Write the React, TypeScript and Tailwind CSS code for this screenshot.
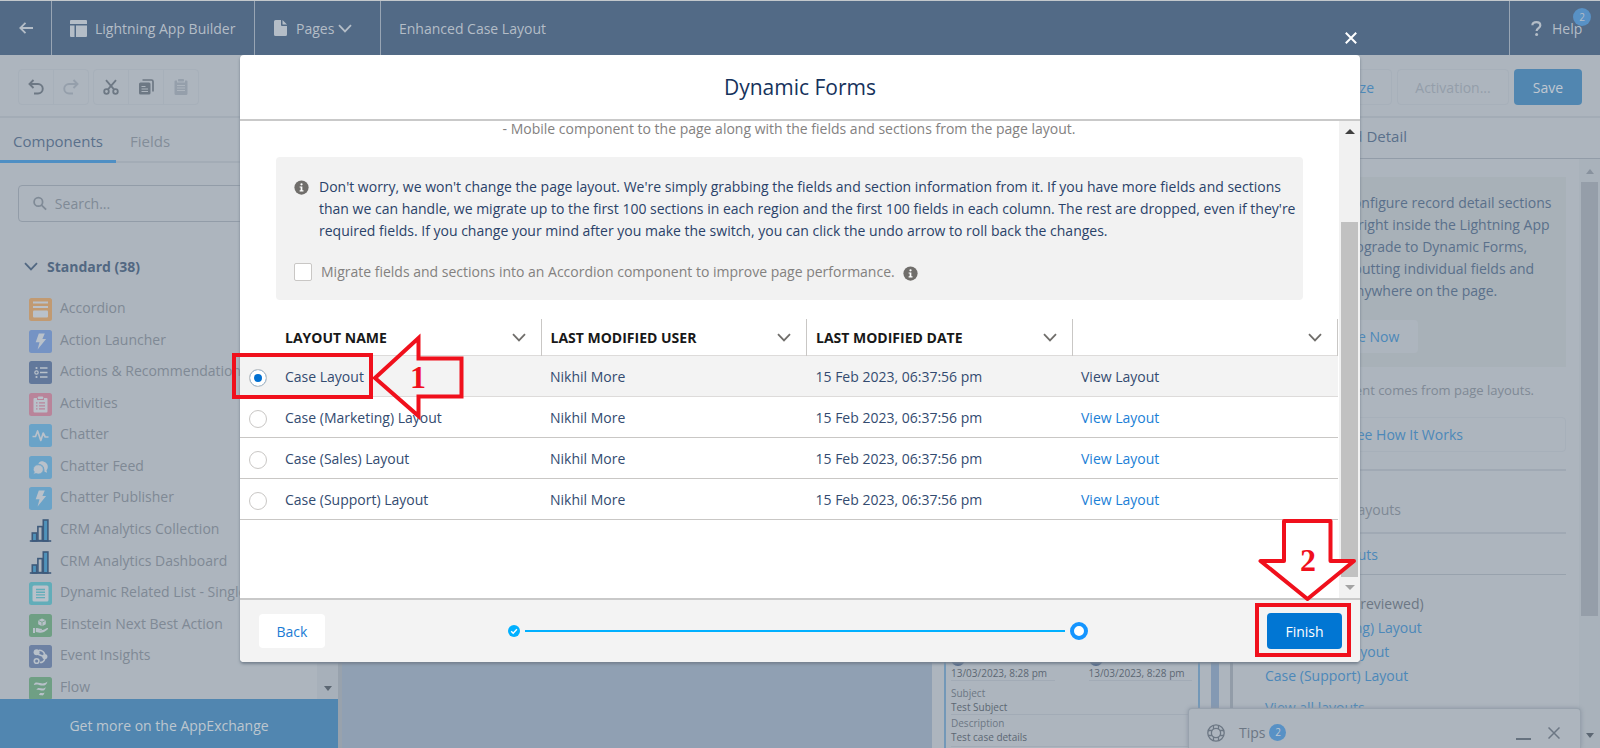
import { useState, type ReactNode } from "react";

const layouts = ["Case Layout", "Case (Marketing) Layout", "Case (Sales) Layout", "Case (Support) Layout"];
const columns = ["LAYOUT NAME", "LAST MODIFIED USER", "LAST MODIFIED DATE", ""];

function Chevron({ className = "" }: { className?: string }) {
  return (
    <svg viewBox="0 0 14 9" className={className} fill="none" stroke="currentColor" strokeWidth="1.8" aria-hidden="true">
      <path d="M1 1.2 7 7.4 13 1.2" />
    </svg>
  );
}

function Info({ className = "" }: { className?: string }) {
  return (
    <svg viewBox="0 0 16 16" className={className} aria-hidden="true">
      <circle cx="8" cy="8" r="7.6" fill="#706e6b" />
      <circle cx="8" cy="4.6" r="1.2" fill="#fff" />
      <path d="M6 6.8h2.9v4.1h1.2v1.3H6v-1.3h1.1V8.1H6z" fill="#fff" />
    </svg>
  );
}

function Tile({ bg, children }: { bg: string; children: ReactNode }) {
  return (
    <svg viewBox="0 0 23 23" className="size-[23px] shrink-0" aria-hidden="true">
      <rect width="23" height="23" rx="2.5" fill={bg} />
      {children}
    </svg>
  );
}

const pale = "#b9c1ca";

const bolt = <path d="M9.8 3.5h6l-2.4 5.6h3.7L8.6 19.6l1.9-7.4H6.7z" fill={pale} />;

function BarsIcon() {
  return (
    <svg viewBox="0 0 23 23" className="size-[23px] shrink-0" aria-hidden="true">
      <g stroke="#3e5a7b" strokeWidth="1.6">
        <rect x="3.3" y="14" width="4.4" height="8" fill="#4f93bb" />
        <rect x="8.9" y="7.6" width="4.4" height="14" fill="#adb5be" />
        <rect x="14.3" y="1" width="4.6" height="21" fill="#4f93bb" />
        <path d="M.8 22h21.4" />
      </g>
    </svg>
  );
}

const components: { name: string; icon: ReactNode }[] = [
  {
    name: "Accordion",
    icon: (
      <Tile bg="#c19a72">
        <path d="M4 4.6h15M4 9h15" stroke={pale} strokeWidth="2" />
        <rect x="4" y="12.4" width="15" height="7" rx="1" fill={pale} />
      </Tile>
    ),
  },
  { name: "Action Launcher", icon: <Tile bg="#7593c4">{bolt}</Tile> },
  {
    name: "Actions & Recommendations",
    icon: (
      <Tile bg="#62789b">
        <path d="M11 7h7.500M11 11.500h7.500M11 16h7.500" stroke={pale} strokeWidth="1.700" />
        <circle cx="7.500" cy="7" r="1.100" fill={pale} />
        <circle cx="7.500" cy="11.500" r="1.700" fill="none" stroke={pale} strokeWidth="1.200" />
        <circle cx="7.500" cy="16" r="1.100" fill={pale} />
      </Tile>
    ),
  },
  {
    name: "Activities",
    icon: (
      <Tile bg="#b9849a">
        <path d="M5.500 5h2.500v2h7V5h2.500a1 1 0 0 1 1 1v12.500a1 1 0 0 1-1 1h-12a1 1 0 0 1-1-1V6a1 1 0 0 1 1-1z" fill={pale} />
        <rect x="8.800" y="3.400" width="5.400" height="2.600" rx=".8" fill={pale} />
        <path d="M7 9.800h1.500M10 9.800h6M7 12.800h1.500M10 12.800h6M7 15.800h1.500M10 15.800h6" stroke="#b9849a" strokeWidth="1.300" />
      </Tile>
    ),
  },
  {
    name: "Chatter",
    icon: (
      <Tile bg="#6aa3c8">
        <path d="M3.500 12.500h3L8.600 7l3.200 9.500 2.400-7.500 2 4h3.300" fill="none" stroke={pale} strokeWidth="1.700" strokeLinejoin="round" />
      </Tile>
    ),
  },
  {
    name: "Chatter Feed",
    icon: (
      <Tile bg="#6aa3c8">
        <path d="M12.500 5.200c3.600 0 6.300 2.400 6.300 5.500 0 1.400-.5 2.600-1.300 3.500l.6 2.500-2.600-.9c.3-5-2.300-7.800-6.200-8 .8-1.600 1.800-2.600 3.200-2.600z" fill={pale} />
        <path d="M9.300 8.800c3 0 5 2 5 4.600s-2.200 4.600-5 4.600c-.8 0-1.600-.2-2.300-.5l-2.600.8.900-2.400c-.6-.7-1-1.600-1-2.500 0-2.600 2.200-4.600 5-4.600z" fill={pale} stroke="#6aa3c8" strokeWidth=".7" />
      </Tile>
    ),
  },
  { name: "Chatter Publisher", icon: <Tile bg="#6aa3c8">{bolt}</Tile> },
  { name: "CRM Analytics Collection", icon: <BarsIcon /> },
  { name: "CRM Analytics Dashboard", icon: <BarsIcon /> },
  {
    name: "Dynamic Related List - Single",
    icon: (
      <Tile bg="#62adb9">
        <rect x="3.500" y="3.500" width="16" height="16" rx="1.500" fill={pale} />
        <path d="M7 7.500h9M7 10.200h9M7 12.900h9M7 15.600h9" stroke="#62adb9" strokeWidth="1.400" />
      </Tile>
    ),
  },
  {
    name: "Einstein Next Best Action",
    icon: (
      <Tile bg="#6f9f84">
        <path d="m13 4.500 3.800 1.800v4L13 12.200l-3.800-1.900v-4z" fill={pale} />
        <path d="m9.400 6.400 3.600 1.800 3.600-1.800M13 8.200v4" fill="none" stroke="#6f9f84" strokeWidth=".8" />
        <path d="M4 14h2v5H4zM6.800 14.200c2-.8 3.400.6 5.500.6 1 0 1 1.200 0 1.300h-2c3 .7 5.500-.6 7.700-2 .8-.3 1.500.5.8 1.200-2.700 2.500-5.500 3.700-8 3.500l-4-.8z" fill={pale} />
      </Tile>
    ),
  },
  {
    name: "Event Insights",
    icon: (
      <Tile bg="#6d81a3">
        <circle cx="7.600" cy="7.300" r="3" fill={pale} />
        <circle cx="15.800" cy="11.500" r="2.600" fill={pale} />
        <circle cx="7.600" cy="16" r="2.300" fill="none" stroke={pale} strokeWidth="1.600" />
        <path d="M10 5.200c3 0 4.800 1.400 5.700 4M11 17.500c2.400 0 4-1.200 4.800-3.600M9 9.200l5 2" fill="none" stroke={pale} strokeWidth="1.600" />
      </Tile>
    ),
  },
  {
    name: "Flow",
    icon: (
      <Tile bg="#6f9f84">
        <path d="M4.800 8c1-3.600 3.700-2.400 6.200-1.900 2.700.6 4.600.6 7.500-1.600-1 4-3.700 4.500-6.400 3.900-2.800-.7-4.600-1.600-7.300-.4zM7.500 13c.8-2.800 2.800-2.200 4.700-1.700 1.700.4 2.900.2 4.600-1.100-.8 3.200-2.600 3.700-4.500 3.200-2-.4-3.200-1-4.800-.4zM10 18c.6-2.400 1.700-2.200 2.900-1.900 1 .2 1.600.1 2.600-.6-.6 2.700-1.700 3.200-2.900 2.800-1-.3-1.700-.6-2.600-.3z" fill={pale} />
      </Tile>
    ),
  },
];

function TopBar() {
  return (
    <header className="flex h-[55px] shrink-0 border-t border-[#c3c8cc] bg-[#526a86] text-[14px] text-[#b4bdc7]">
      <button aria-label="Back to previous page" className="flex w-[52px] items-center justify-center border-r border-[#98a5b4]">
        <svg viewBox="0 0 14 12" className="h-3 w-3.5" fill="none" stroke="currentColor" strokeWidth="1.8" aria-hidden="true">
          <path d="M14 6H1.500M6.500.8 1.300 6l5.200 5.200" />
        </svg>
      </button>
      <a href="#" className="flex w-[203px] items-center gap-2 border-r border-[#98a5b4] pl-[18px]">
        <svg viewBox="0 0 17 17" className="size-[17px]" fill="currentColor" aria-hidden="true">
          <path d="M1 0h15a1 1 0 0 1 1 1v3H0V1a1 1 0 0 1 1-1zM0 5.500h4.500V17H1a1 1 0 0 1-1-1zM6 5.500h11V16a1 1 0 0 1-1 1H6z" />
        </svg>
        Lightning App Builder
      </a>
      <button className="flex w-[126px] items-center border-r border-[#98a5b4] pl-[19px]">
        <svg viewBox="0 0 13 16" className="mr-[9px] h-4 w-[13px]" fill="currentColor" aria-hidden="true">
          <path d="M1.500 0H7v5a1 1 0 0 0 1 1h5v8.500a1.500 1.500 0 0 1-1.500 1.500h-10A1.500 1.500 0 0 1 0 14.500v-13A1.500 1.500 0 0 1 1.500 0zM8.500 0 13 4.500H8.500z" />
        </svg>
        Pages
        <Chevron className="ml-1 h-[9px] w-3.5" />
      </button>
      <span className="flex flex-1 items-center pl-[18px]">Enhanced Case Layout</span>
      <button className="relative flex w-[91px] items-center border-l border-[#98a5b4] pl-[21px]">
        <svg viewBox="0 0 11 15" className="mr-2.5 h-[15px] w-[11px]" aria-hidden="true">
          <path d="M1.400 4.200C1.400 2.200 3 1.200 5.300 1.200s4 1.200 4 3.200c0 2.700-3.700 2.600-3.700 5.600" fill="none" stroke="currentColor" strokeWidth="2.200" />
          <circle cx="5.600" cy="13.400" r="1.500" fill="currentColor" />
        </svg>
        Help
        <span className="absolute top-[7px] right-[9px] flex size-[18px] items-center justify-center rounded-full bg-[#5891c5] text-[10px]">2</span>
      </button>
    </header>
  );
}

const toolButton = "flex w-[35px] items-center justify-center border-r border-[#a7b0ba]";

function Toolbar() {
  return (
    <div className="flex h-[63px] shrink-0 items-center border-b-2 border-[#a3acb6] px-[18px] pt-[3px]">
      <div className="flex h-9 rounded border border-[#a7b0ba] text-[#6d7884]">
        <button aria-label="Undo" className={toolButton}>
          <svg viewBox="0 0 16 16" className="size-4" fill="none" stroke="currentColor" strokeWidth="1.900" aria-hidden="true">
            <path d="M5.500 1 1.500 5l4 4M1.800 5H10a4.600 4.600 0 0 1 0 9.500H6" />
          </svg>
        </button>
        <button aria-label="Redo" className="flex w-[34px] items-center justify-center text-[#959fab]">
          <svg viewBox="0 0 16 16" className="size-4" fill="none" stroke="currentColor" strokeWidth="1.900" aria-hidden="true">
            <path d="m10.500 1 4 4-4 4M14.200 5H6a4.600 4.600 0 0 0 0 9.500h4" />
          </svg>
        </button>
      </div>
      <div className="ml-1 flex h-9 rounded border border-[#a7b0ba] text-[#6d7884]">
        <button aria-label="Cut" className={toolButton}>
          <svg viewBox="0 0 16 16" className="size-4" fill="none" stroke="currentColor" strokeWidth="1.800" aria-hidden="true">
            <circle cx="3.500" cy="12.500" r="2.300" />
            <circle cx="12.500" cy="12.500" r="2.300" />
            <path d="M3 1.200 11.200 10.700M13 1.200 4.800 10.700" />
          </svg>
        </button>
        <button aria-label="Copy" className={toolButton}>
          <svg viewBox="0 0 16 16" className="size-4" aria-hidden="true">
            <path d="M4.500 1h9A1.500 1.500 0 0 1 15 2.500v10" fill="none" stroke="currentColor" strokeWidth="1.700" />
            <rect x="1" y="3.500" width="11.500" height="12" rx="1.500" fill="currentColor" />
            <path d="M3.500 7.500h4M3.500 10h6.500M3.500 12.500h6.500" stroke="#adb5be" strokeWidth="1.100" />
          </svg>
        </button>
        <button aria-label="Paste" className="flex w-[34px] items-center justify-center text-[#959fab]">
          <svg viewBox="0 0 16 16" className="size-4" aria-hidden="true">
            <path d="M2.500 1.500H4v2h8v-2h1.500A1 1 0 0 1 14.500 2.500v12a1.500 1.500 0 0 1-1.500 1.500H3a1.500 1.500 0 0 1-1.500-1.500v-12a1 1 0 0 1 1-1z" fill="currentColor" />
            <rect x="5" width="6" height="2.500" rx=".8" fill="currentColor" />
            <path d="M4 6.500h8M4 9h8M4 11.500h8" stroke="#adb5be" strokeWidth="1" />
          </svg>
        </button>
      </div>
      <div className="ml-auto flex h-9 gap-[5px]">
        <button className="rounded border border-[#a7b0ba] px-[17px] text-[#4c88b9]">Analyze</button>
        <button className="w-28 rounded border border-[#a7b0ba] text-[#949eaa]">Activation...</button>
        <button className="w-[68px] rounded bg-[#5186b0] text-[#c0c8d1]">Save</button>
      </div>
    </div>
  );
}

function Sidebar() {
  return (
    <aside className="flex w-[342px] shrink-0 flex-col border-r-4 border-[#98a2ad]">
      <div role="tablist" className="flex h-[45px] shrink-0 border-b-2 border-[#a3acb6] text-[15px]">
        <button role="tab" aria-selected="true" className="-mb-0.5 w-[116px] border-b-[3px] border-[#4f8fc4] pt-1 text-[#5a708b]">
          Components
        </button>
        <button role="tab" aria-selected="false" className="ml-3.5 pt-[3px] text-[#838d99]">
          Fields
        </button>
      </div>
      <label className="mx-[18px] mt-[22px] flex h-[37px] shrink-0 items-center gap-2 rounded border border-[#929ca8] pl-3.5 text-[#7f8a96]">
        <svg viewBox="0 0 15 15" className="size-[15px]" fill="none" stroke="currentColor" strokeWidth="1.900" aria-hidden="true">
          <circle cx="5.800" cy="5.800" r="4.600" />
          <path d="m9.200 9.200 5 5" />
        </svg>
        <input aria-label="Search components" placeholder="Search..." className="w-full bg-transparent outline-none placeholder:text-[#7f8a96]" />
      </label>
      <div className="flex min-h-0 flex-1">
        <div className="min-w-0 flex-1 overflow-hidden">
          <h2 className="mt-8 flex h-6 items-center gap-[9px] pl-6 font-bold text-[#526882]">
            <Chevron className="h-[9px] w-3.5" />
            Standard (38)
          </h2>
          <ul className="mt-4 grid h-[410px] auto-rows-fr text-[#7f8995]">
            {components.map((c) => (
              <li key={c.name} className="flex items-center gap-2 pl-[29px] whitespace-nowrap">
                {c.icon}
                <span className="-mt-1">{c.name}</span>
              </li>
            ))}
          </ul>
        </div>
        <div className="flex w-[21px] items-end justify-center bg-[#a7b0ba] pb-2">
          <span className="border-x-4 border-t-[5px] border-x-transparent border-t-[#5c6773]" />
        </div>
      </div>
      <a href="#" className="flex h-[49px] shrink-0 items-center justify-center bg-[#5186b0] pt-1 text-[#bdc6cf]">
        Get more on the AppExchange
      </a>
    </aside>
  );
}

function Preview() {
  return (
    <main className="flex min-w-0 flex-1 bg-[#90a0b3]">
      <div className="flex-1" />
      <div className="flex w-[301px] bg-[#adb5be]">
        <div className="ml-3 flex w-[256px] flex-col justify-end border-x-2 border-[#7398b8] pr-[6px] pl-[5px] text-[10px] leading-[14px] text-[#5c6773]">
          <div className="grid grid-cols-2 gap-x-[34px]">
            {[0, 1].map((i) => (
              <div key={i} className="border-b border-[#a2abb6]">
                <span className="block size-3.5 rounded-full bg-[#53698c]" />
                <div>13/03/2023, 8:28 pm</div>
              </div>
            ))}
          </div>
          <div className="mt-[5px] text-[#6c7784]">Subject</div>
          <div className="border-b border-[#a2abb6]">Test Subject</div>
          <div className="mt-px text-[#6c7784]">Description</div>
          <div className="mb-px border-b border-[#a2abb6] pb-0.5">Test case details</div>
        </div>
        <div className="ml-[11px] w-2 bg-[#8499b3]" />
        <div className="ml-auto w-[3px] bg-[#929ca8]" />
      </div>
    </main>
  );
}

const infoLines = [
  "You can configure record detail sections",
  "and fields right inside the Lightning App",
  "Builder. Upgrade to Dynamic Forms,",
  "and start putting individual fields and",
  "sections anywhere on the page.",
];

function Properties() {
  return (
    <aside className="flex w-[367px] shrink-0 flex-col">
      <h2 className="flex h-[41px] shrink-0 items-center border-b border-[#929ca8] pb-[3px] pl-[70px] text-[#5a708b]">
        <span className="w-[104px] text-right text-[15px] whitespace-nowrap">Record Detail</span>
      </h2>
      <div className="flex min-h-0 flex-1">
        <div className="min-w-0 flex-1 overflow-hidden px-[13px]">
          <section className="mt-[18px] h-[190px] bg-[#a8b1b8] pt-[15px] pl-[45px] text-[#5a708b]">
            {infoLines.map((line) => (
              <p key={line} className="h-[22px] leading-[22px] whitespace-nowrap">
                {line}
              </p>
            ))}
            <button className="mt-[18px] h-[33px] w-[127px] rounded bg-[#adb5be] text-[#4c88b9]">Upgrade Now</button>
          </section>
          <p className="mt-3 w-[288px] text-right text-[13px] leading-[22px] whitespace-nowrap text-[#7f8995]">
            This component comes from page layouts.
          </p>
          <button className="mt-4 h-[35px] w-full rounded border border-[#a7b0ba] text-[#4c88b9]">See How It Works</button>
          <div className="mt-[17px] h-[65px] border-y-2 border-[#a0a9b4] pt-7 text-[#7f8995]">
            <p className="w-[155px] text-right">Page Layouts</p>
          </div>
          <div className="h-[41px] border-b border-[#98a2ad] pt-2.5 text-[#4c88b9]">
            <a href="#" className="block w-[132px] text-right">
              Assigned Layouts
            </a>
          </div>
          <div className="mt-[17px] pl-[19px] leading-6 text-[#4c88b9]">
            <p className="text-[#6c7784]">Case Layout (previewed)</p>
            {layouts.slice(1).map((l) => (
              <a key={l} href="#" className="block">
                {l}
              </a>
            ))}
            <a href="#" className="mt-2 block">
              View all layouts
            </a>
          </div>
        </div>
        <div className="flex w-[21px] flex-col items-center bg-[#a9b2bb] py-[10px]">
          <span className="border-x-4 border-b-[5px] border-x-transparent border-b-[#88929e]" />
          <span className="mt-2 h-[434px] w-[17px] bg-[#959ea9]" />
          <span className="mt-auto border-x-4 border-t-[5px] border-x-transparent border-t-[#5c6773]" />
        </div>
      </div>
    </aside>
  );
}

function Tips() {
  return (
    <div className="absolute right-[19px] bottom-0 flex h-10 w-[393px] items-center rounded-t border border-b-0 border-[#98a2ad] bg-[#adb5be] pt-2 pr-5 pl-[18px] text-[#6c7784] shadow-[0_0_4px_#8b95a2]">
      <svg viewBox="0 0 18 18" className="size-[18px]" fill="none" stroke="currentColor" strokeWidth="1.300" aria-hidden="true">
        <circle cx="9" cy="9" r="8.200" />
        <circle cx="9" cy="9" r="4.600" />
        <path d="M6.500 1.300v3.900M11.500 1.300v3.900M6.500 12.800v3.900M11.500 12.800v3.900M1.300 6.500h3.900M1.300 11.500h3.900M12.800 6.500h3.900M12.800 11.500h3.900" />
      </svg>
      <span className="ml-3.5">Tips</span>
      <span className="ml-1 flex size-[17px] items-center justify-center rounded-full bg-[#5891c5] text-[10px] text-[#c0c8d1]">2</span>
      <button aria-label="Minimize tips" className="mt-3 ml-auto h-0.5 w-[15px] bg-[#66727f]" />
      <button aria-label="Close tips" className="ml-[17px]">
        <svg viewBox="0 0 12 12" className="size-3" stroke="currentColor" strokeWidth="1.500" aria-hidden="true">
          <path d="m.5.5 11 11M11.500.5l-11 11" />
        </svg>
      </button>
    </div>
  );
}

function LayoutTable() {
  const [selected, setSelected] = useState(0);
  return (
    <table className="mt-[19px] w-full table-fixed border-collapse text-left">
      <colgroup>
        <col className="w-[45px]" />
        <col className="w-[256px]" />
        <col />
        <col />
        <col />
      </colgroup>
      <thead>
        <tr className="h-9 border-b border-[#dddbda] text-[#181818]">
          <th aria-label="Select" />
          {columns.map((c, i) => (
            <th key={i} className={i === 0 ? "border-r border-[#c9c7c5] p-0 pt-0.5 pr-[15px]" : "border-r border-[#c9c7c5] p-0 pt-0.5 pr-[15px] pl-[9px]"}>
              <div className="flex items-center justify-between font-bold">
                {c}
                <button aria-label="Column actions" className="ml-auto text-[#706e6b]">
                  <Chevron className="h-[9px] w-3.5" />
                </button>
              </div>
            </th>
          ))}
        </tr>
      </thead>
      <tbody>
        {layouts.map((name, i) => (
          <tr key={name} className={selected === i ? "h-[41px] border-b border-[#dddbda] bg-[#f3f3f3] text-[#334b70]" : "h-[41px] border-b border-[#c9c7c5] text-[#334b70]"}>
            <td className="p-0 pl-[9px]">
              <input
                id={`layout-${i}`}
                type="radio"
                name="layout"
                checked={selected === i}
                onChange={() => setSelected(i)}
                className="mt-1 block size-[18px] appearance-none rounded-full border border-[#c9c7c5] bg-white checked:bg-[#0070d2] checked:shadow-[inset_0_0_0_4px_white]"
              />
            </td>
            <td className="p-0 pt-0.5">
              <label htmlFor={`layout-${i}`}>{name}</label>
            </td>
            <td className="p-0 pt-0.5 pl-[9px]">Nikhil More</td>
            <td className="p-0 pt-0.5 pl-[9px]">15 Feb 2023, 06:37:56 pm</td>
            <td className="p-0 pt-0.5 pl-[9px]">
              <a href="#" className={selected === i ? "text-[#334b70]" : "text-[#1a80d6]"}>
                View Layout
              </a>
            </td>
          </tr>
        ))}
      </tbody>
    </table>
  );
}

function Annotations() {
  return (
    <>
      <svg viewBox="0 0 240 92" className="pointer-events-none absolute top-[275px] -left-3 h-[92px] w-60" fill="none" stroke="#f0101c" strokeWidth="4" role="img" aria-label="Step 1">
        <rect x="6" y="25" width="137" height="42" />
        <path d="M147 48 190.500 8V28.500H233.500V66.500H190.500V86z" />
        <text x="190" y="58" textAnchor="middle" fill="#f0101c" stroke="none" className="font-['Liberation_Serif',serif] text-[32px] font-bold">
          1
        </text>
      </svg>
      <svg viewBox="0 0 110 147" className="pointer-events-none absolute right-0 bottom-0 h-[147px] w-[110px]" fill="none" stroke="#f0101c" strokeWidth="4" role="img" aria-label="Step 2">
        <rect x="7" y="90" width="92" height="50" />
        <path d="M34 6H80.500V46H104L57.500 84 10.500 46H34z" fill="#fff" strokeLinejoin="round" />
        <text x="58" y="56" textAnchor="middle" fill="#f0101c" stroke="none" className="font-['Liberation_Serif',serif] text-[32px] font-bold">
          2
        </text>
      </svg>
    </>
  );
}

function Dialog() {
  return (
    <div className="absolute inset-0 flex justify-center pt-[55px] pb-[86px]">
      <div role="dialog" aria-label="Dynamic Forms" className="relative flex w-[70%] flex-col rounded bg-white shadow-[0_2px_3px_#74808e]">
        <button aria-label="Close" className="absolute -top-[23px] right-[3px] text-white">
          <svg viewBox="0 0 12 12" className="size-3" stroke="currentColor" strokeWidth="2" aria-hidden="true">
            <path d="m.8.8 10.400 10.400M11.200.8.8 11.200" />
          </svg>
        </button>
        <h1 className="flex h-[66px] shrink-0 items-center justify-center border-b-2 border-[#c9c9c9] pt-0.5 text-[21px] text-[#16325c]">Dynamic Forms</h1>
        <div className="flex min-h-0 flex-1 overflow-hidden">
          <div className="min-w-0 flex-1 pr-px">
            <p className="h-9 text-center leading-4 text-[#83817f]">
              - Mobile component to the page along with the fields and sections from the page layout.
            </p>
            <div className="mr-[35px] ml-9 h-[143px] rounded bg-[#f2f2f2] pt-[19px] pl-[18px] leading-[22px]">
              <div className="flex">
                <Info className="mt-1 mr-[10px] size-[15px] shrink-0" />
                <p className="text-[#2a4269]">
                  Don't worry, we won't change the page layout. We're simply grabbing the fields and section information from it. If you have more fields and sections
                  <br />
                  than we can handle, we migrate up to the first 100 sections in each region and the first 100 fields in each column. The rest are dropped, even if they're
                  <br />
                  required fields. If you change your mind after you make the switch, you can click the undo arrow to roll back the changes.
                </p>
              </div>
              <div className="mt-[19px] flex items-center text-[#83817f]">
                <input id="accordion" type="checkbox" className="size-[18px] appearance-none rounded-xs border border-[#c9c7c5] bg-white checked:bg-[#0070d2]" />
                <label htmlFor="accordion" className="ml-[9px]">
                  Migrate fields and sections into an Accordion component to improve page performance.
                </label>
                <Info className="mt-0.5 ml-2 size-[15px]" />
              </div>
            </div>
            <LayoutTable />
          </div>
          <div className="flex w-[21px] shrink-0 flex-col items-center bg-[#f1f1f1] py-2">
            <span className="border-x-[5px] border-b-[5px] border-x-transparent border-b-[#404040]" />
            <span className="mt-[88px] w-[17px] flex-1 bg-[#c1c1c1]" />
            <span className="mt-2 border-x-[5px] border-t-[5px] border-x-transparent border-t-[#a3a3a3]" />
          </div>
        </div>
        <footer className="flex h-16 shrink-0 items-center justify-between rounded-b border-t-2 border-[#c9c9c9] bg-[#f3f3f3] pr-[18px] pl-[19px]">
          <button className="h-[34px] w-[66px] rounded bg-white text-[#1a7bd4]">Back</button>
          <div className="ml-1 flex w-[580px] items-center" role="progressbar" aria-label="Progress">
            <svg viewBox="0 0 12 12" className="size-3" aria-hidden="true">
              <circle cx="6" cy="6" r="6" fill="#00b0ff" />
              <path d="M3.200 6.200 5.200 8.200 8.900 4.300" fill="none" stroke="#fff" strokeWidth="1.400" />
            </svg>
            <span className="mx-[5px] h-0.5 flex-1 bg-[#00b0ff]" />
            <span className="size-[18px] rounded-full border-4 border-[#1595ff] bg-white" />
          </div>
          <button className="h-9 w-[75px] rounded bg-[#0176d3] text-white">Finish</button>
        </footer>
        <Annotations />
      </div>
    </div>
  );
}

export default function App() {
  return (
    <div className="relative flex h-screen flex-col overflow-hidden bg-[#adb5be] font-['Open_Sans','Noto_Sans',sans-serif] text-[14px]">
      <TopBar />
      <Toolbar />
      <div className="flex min-h-0 flex-1">
        <Sidebar />
        <Preview />
        <Properties />
      </div>
      <Tips />
      <Dialog />
    </div>
  );
}
